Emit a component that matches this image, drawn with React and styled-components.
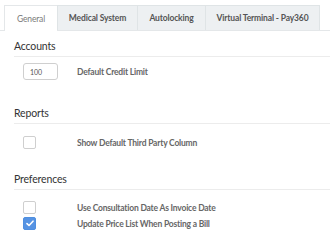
import React from "react";
import styled, { createGlobalStyle } from "styled-components";

const GlobalStyle = createGlobalStyle`
  body {
    margin: 0;
    background: #fff;
    font-family: "Lato", "Open Sans", sans-serif;
  }
`;

const Page = styled.div`
  width: 330px;
  height: 247px;
  overflow: hidden;
  background: #fff;
`;

const TabBar = styled.div`
  display: flex;
  padding: 5px 0 0 5px;
  border-bottom: 1px solid #e4e7e9;
`;

const Tab = styled.div`
  display: flex;
  align-items: center;
  justify-content: center;
  width: ${p => p.w}px;
  box-sizing: border-box;
  font-size: 8.5px;
  letter-spacing: -0.15px;
  font-weight: ${p => (p.active ? 400 : 700)};
  color: ${p => (p.active ? "#7a7a7a" : "#555")};
  background: ${p => (p.active ? "#fff" : "#edf0f2")};
  border: 1px solid ${p => (p.active ? "#e4e7e9" : "#dfe4e6")};
  border-bottom: none;
  margin-left: -1px;
  margin-bottom: ${p => (p.active ? "-1px" : "0")};
  height: ${p => (p.active ? "26px" : "25px")};
`;

const Section = styled.div`
  padding: 0 0 0 14px;
`;

const Heading = styled.div`
  font-size: 10.5px;
  letter-spacing: -0.15px;
  color: #333;
  padding-bottom: 4px;
  border-bottom: 1px solid #ececec;
  margin-top: ${p => p.top}px;
`;

const Row = styled.div`
  display: flex;
  align-items: center;
  height: ${p => p.h}px;
  margin-top: ${p => p.top || 0}px;
`;

const Control = styled.div`
  width: 63px;
  box-sizing: border-box;
  padding-left: 9px;
  display: flex;
  align-items: center;
`;

const Label = styled.div`
  font-size: 8.5px;
  letter-spacing: -0.2px;
  font-weight: 700;
  color: #666;
`;

const NumberInput = styled.div`
  width: 35px;
  height: 17px;
  box-sizing: border-box;
  border: 1px solid #cfcfcf;
  border-radius: 3px;
  font-size: 7px;
  color: #555;
  display: flex;
  align-items: center;
  padding-left: 6px;
`;

const Checkbox = styled.div`
  width: 13px;
  height: 13px;
  box-sizing: border-box;
  border-radius: 2px;
  border: 1px solid ${p => (p.checked ? "#4f8fe0" : "#cfcfcf")};
  background: ${p => (p.checked ? "#5693e3" : "#fff")};
  display: flex;
  align-items: center;
  justify-content: center;
`;

const Tick = () => (
  <svg width="8" height="7" viewBox="0 0 8 7">
    <path d="M1 3.6 L3 5.5 L7 1.2" fill="none" stroke="#fff" strokeWidth="1.6" strokeLinecap="round" strokeLinejoin="round" />
  </svg>
);

const tabs = [
  { name: "General", w: 54, active: true },
  { name: "Medical System", w: 81 },
  { name: "Autolocking", w: 69 },
  { name: "Virtual Terminal - Pay360", w: 115 }
];

export default function App() {
  return (
    <Page>
      <GlobalStyle />
      <TabBar>
        {tabs.map(t => (
          <Tab key={t.name} w={t.w} active={t.active}>
            {t.name}
          </Tab>
        ))}
      </TabBar>
      <Section>
        <Heading top={9}>Accounts</Heading>
        <Row h={17} top={6}>
          <Control>
            <NumberInput>100</NumberInput>
          </Control>
          <Label>Default Credit Limit</Label>
        </Row>
        <Heading top={27}>Reports</Heading>
        <Row h={13} top={12}>
          <Control>
            <Checkbox />
          </Control>
          <Label>Show Default Third Party Column</Label>
        </Row>
        <Heading top={24}>Preferences</Heading>
        <Row h={13} top={11}>
          <Control>
            <Checkbox />
          </Control>
          <Label>Use Consultation Date As Invoice Date</Label>
        </Row>
        <Row h={13} top={3}>
          <Control>
            <Checkbox checked>
              <Tick />
            </Checkbox>
          </Control>
          <Label>Update Price List When Posting a Bill</Label>
        </Row>
      </Section>
    </Page>
  );
}
